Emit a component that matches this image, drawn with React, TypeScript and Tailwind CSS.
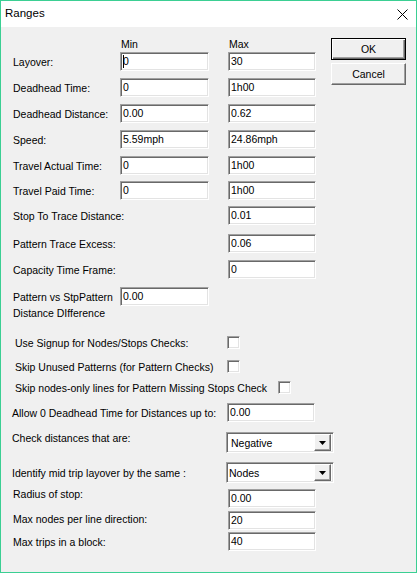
import React from "react";

const sunken =
  "bg-white border border-t-[#a0a0a0] border-l-[#a0a0a0] border-r-white border-b-white shadow-[inset_1px_1px_0_#696969,inset_-1px_-1px_0_#e3e3e3]";

function Field({ value, wide = false, caret = false }: { value: string; wide?: boolean; caret?: boolean }) {
  return (
    <div className={`${sunken} ${wide ? "w-[89px]" : "w-[88px]"} h-[19px] shrink-0 flex items-center pl-[2px] leading-none`}>
      {caret ? <span className="inline-block w-px h-[13px] bg-black -mr-px" /> : null}
      <span>{value}</span>
    </div>
  );
}

function Check() {
  return <div className={`${sunken} w-[13px] h-[13px] shrink-0`} />;
}

function Combo({ value, padded = false }: { value: string; padded?: boolean }) {
  return (
    <div className={`${sunken} w-[108px] h-[21px] shrink-0 flex items-center`}>
      <span className={`flex-1 ${padded ? "pl-[4px]" : "pl-[2px]"}`}>{value}</span>
      <div className="w-[17px] h-[17px] mr-[2px] bg-[#f0f0f0] border border-t-white border-l-white border-r-[#696969] border-b-[#696969] shadow-[inset_-1px_-1px_0_#a0a0a0] flex items-center justify-center">
        <svg width="7" height="4" viewBox="0 0 7 4">
          <path d="M0 0h7L3.5 4z" fill="#000" />
        </svg>
      </div>
    </div>
  );
}

const pairRows = [
  { label: "Layover:", min: "0", max: "30", mt: "mt-[2px]", caret: true },
  { label: "Deadhead Time:", min: "0", max: "1h00", mt: "mt-[7px]" },
  { label: "Deadhead Distance:", min: "0.00", max: "0.62", mt: "mt-[7px]" },
  { label: "Speed:", min: "5.59mph", max: "24.86mph", mt: "mt-[7px]" },
  { label: "Travel Actual Time:", min: "0", max: "1h00", mt: "mt-[7px]" },
  { label: "Travel Paid Time:", min: "0", max: "1h00", mt: "mt-[6px]" },
];

const maxRows = [
  { label: "Stop To Trace Distance:", value: "0.01", mt: "mt-[6px]" },
  { label: "Pattern Trace Excess:", value: "0.06", mt: "mt-[9px]" },
  { label: "Capacity Time Frame:", value: "0", mt: "mt-[7px]" },
];

function WinButton({ children, isDefault = false }: { children: React.ReactNode; isDefault?: boolean }) {
  return (
    <button
      type="button"
      className={`w-[75px] h-[22px] bg-[#f0f0f0] flex items-center justify-center ${
        isDefault
          ? "border border-black shadow-[inset_1px_1px_0_#fff,inset_-1px_-1px_0_#696969,inset_-2px_-2px_0_#a0a0a0]"
          : "border border-t-white border-l-white border-r-[#696969] border-b-[#696969] shadow-[inset_-1px_-1px_0_#a0a0a0]"
      }`}
    >
      {children}
    </button>
  );
}

export default function App() {
  return (
    <div className="w-[418px] h-[573px] bg-white">
      <div className="w-[417px] h-[573px] border border-[#3bcf93] flex flex-col font-['Liberation_Sans',Arial,sans-serif] text-black">
        {/* title bar */}
        <div className="h-[26px] bg-white flex items-center justify-between pl-[4px] pr-[8px] shrink-0">
          <span className="text-[11.5px]">Ranges</span>
          <svg width="11" height="11" viewBox="0 0 11 11">
            <path d="M0.5 0.5l10 10M10.5 0.5l-10 10" stroke="#000" strokeWidth="1" />
          </svg>
        </div>

        {/* body */}
        <div className="flex-1 bg-[#f0f0f0] flex pl-[12px] text-[10.5px] leading-[12px]">
          <div className="w-[318px] shrink-0 flex flex-col">
            <div className="flex mt-[11px] h-[12px]">
              <span className="w-[108px] shrink-0" />
              <span className="w-[108px] shrink-0">Min</span>
              <span>Max</span>
            </div>

            {pairRows.map((r) => (
              <div key={r.label} className={`flex items-center ${r.mt}`}>
                <span className="w-[107px] shrink-0">{r.label}</span>
                <Field value={r.min} wide caret={r.caret} />
                <span className="w-[19px] shrink-0" />
                <Field value={r.max} />
              </div>
            ))}

            {maxRows.map((r) => (
              <div key={r.label} className={`flex items-center ${r.mt}`}>
                <span className="w-[215px] shrink-0">{r.label}</span>
                <Field value={r.value} />
              </div>
            ))}

            <div className="flex items-center mt-[8px]">
              <span className="w-[107px] shrink-0 whitespace-nowrap">Pattern vs StpPattern</span>
              <Field value="0.00" wide />
            </div>
            <div className="mt-[1px]">Distance DIfference</div>

            <div className="flex items-center mt-[17px]">
              <span className="w-[214px] shrink-0 pl-[2px]">Use Signup for Nodes/Stops Checks:</span>
              <Check />
            </div>
            <div className="flex items-center mt-[11px]">
              <span className="w-[214px] shrink-0 pl-[2px]">Skip Unused Patterns (for Pattern Checks)</span>
              <Check />
            </div>
            <div className="flex items-center mt-[8px]">
              <span className="w-[265px] shrink-0 pl-[2px] whitespace-nowrap">Skip nodes-only lines for Pattern Missing Stops Check</span>
              <Check />
            </div>

            <div className="flex items-center mt-[9px] -ml-px">
              <span className="w-[215px] shrink-0 whitespace-nowrap">Allow 0 Deadhead Time for Distances up to:</span>
              <Field value="0.00" />
            </div>

            <div className="flex items-start mt-[10px] -ml-px">
              <span className="w-[214px] shrink-0">Check distances that are:</span>
              <Combo value="Negative" padded />
            </div>
            <div className="flex items-center mt-[9px] -ml-px">
              <span className="w-[214px] shrink-0">Identify mid trip layover by the same :</span>
              <Combo value="Nodes" />
            </div>

            <div className="flex items-start mt-[6px]">
              <span className="w-[215px] shrink-0 -mt-px">Radius of stop:</span>
              <Field value="0.00" />
            </div>
            <div className="flex items-start mt-[3px]">
              <span className="w-[215px] shrink-0 mt-[2px]">Max nodes per line direction:</span>
              <Field value="20" />
            </div>
            <div className="flex items-center mt-[2px]">
              <span className="w-[215px] shrink-0">Max trips in a block:</span>
              <Field value="40" />
            </div>
          </div>

          <div className="w-[75px] shrink-0 pt-[11px] flex flex-col gap-[3px]">
            <WinButton isDefault>OK</WinButton>
            <WinButton>Cancel</WinButton>
          </div>
        </div>
      </div>
    </div>
  );
}
